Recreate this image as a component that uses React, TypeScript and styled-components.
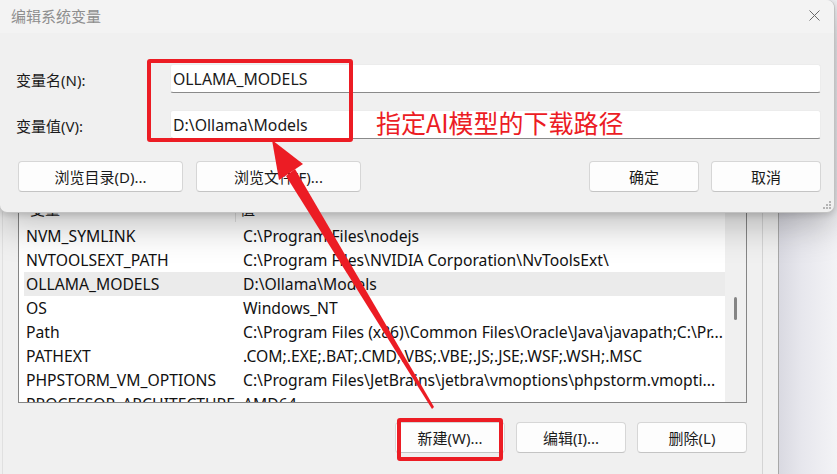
import React from "react";
import styled, { createGlobalStyle } from "styled-components";

const GlobalStyle = createGlobalStyle`
  *, *::before, *::after { box-sizing: border-box; }
  html, body { margin: 0; padding: 0; overflow: hidden; background: #f0f0f0; }
`;

const FONT = `"Noto Sans", "Noto Sans CJK SC", sans-serif`;

const Desktop = styled.div`
  position: relative;
  width: 837px;
  height: 474px;
  overflow: hidden;
  display: flex;
  font-family: ${FONT};
  font-size: 15px;
  color: #1a1a1a;
`;

const ParentWindow = styled.div`
  width: 761px;
  margin-left: 2px;
  background: #f0f0f0;
  border-left: 1px solid #e0e0e0;
  border-right: 1px solid #d4d4d4;
  padding: 198px 0 0 15px;
  display: flex;
  flex-direction: column;
`;

const SideStrip = styled.div`
  width: 16px;
  background: #f0f0f0;
  border-right: 1px solid #a8a8a8;
`;

const Backdrop = styled.div`
  flex: 1;
  background: linear-gradient(90deg, #d9d9e1 0%, #e7e7ed 40%, #f3f3f6 100%);
`;

const ListBox = styled.div`
  width: 729px;
  height: 205px;
  border: 1px solid #858585;
  background: #fff;
  display: flex;
  overflow: hidden;
`;

const ListBody = styled.div`
  flex: 1;
  padding-left: 5px;
  overflow: hidden;
`;

const HeaderRow = styled.div`
  height: 25px;
  display: flex;
  line-height: 20px;
`;

const HeaderCell = styled.div<{ $w?: number; $divider?: boolean }>`
  ${(p) => (p.$w ? `width: ${p.$w}px;` : "flex: 1;")}
  padding-left: ${(p) => (p.$divider ? 6 : 4)}px;
  border-right: ${(p) => (p.$divider ? "1px solid #e3e3e3" : "none")};
  height: 23px;
`;

const Row = styled.div<{ $selected?: boolean }>`
  height: 24px;
  display: flex;
  align-items: center;
  background: ${(p) => (p.$selected ? "#ebebeb" : "transparent")};
  white-space: nowrap;
  font-size: 15.7px;
`;

const Cell = styled.div<{ $w?: number }>`
  ${(p) => (p.$w ? `width: ${p.$w}px; flex: none;` : "flex: 1;")}
  padding-left: 2px;
  overflow: hidden;
  color: #111;
`;

const ScrollTrack = styled.div`
  width: 21px;
  background: #f0f0f0;
  display: flex;
  justify-content: center;
  padding-top: 98px;
`;

const ScrollThumb = styled.div`
  width: 3px;
  height: 23px;
  border-radius: 2px;
  background: #858585;
`;

const ParentButtons = styled.div`
  width: 729px;
  margin-top: 19px;
  display: flex;
  justify-content: flex-end;
  gap: 11px;
`;

const Button = styled.button<{ $w: number }>`
  width: ${(p) => p.$w}px;
  height: 31px;
  padding: 0;
  background: #fdfdfd;
  border: 1px solid #d6d6d6;
  border-bottom-color: #c4c4c4;
  border-radius: 4px;
  font-family: ${FONT};
  font-size: 15px;
  color: #1a1a1a;
  display: flex;
  align-items: center;
  justify-content: center;
`;

const Dialog = styled.div`
  position: absolute;
  left: -1px;
  top: 0;
  width: 836px;
  height: 213px;
  background: #f0f0f0;
  border: 1px solid #c2c2c2;
  border-top: none;
  border-radius: 0 8px 8px 8px;
  box-shadow: 0 12px 36px rgba(0, 0, 0, 0.26), 0 2px 6px rgba(0, 0, 0, 0.14);
  display: flex;
  flex-direction: column;
  z-index: 2;
`;

const TitleBar = styled.div`
  height: 33px;
  background: #f3f3f3;
  border-radius: 0 8px 0 0;
  display: flex;
  align-items: center;
  justify-content: space-between;
  padding: 0 14px 2px 11px;
`;

const Title = styled.div`
  font-size: 15px;
  color: #8e8e8e;
`;

const DialogBody = styled.div`
  flex: 1;
  padding: 31px 13px 0 16px;
  display: flex;
  flex-direction: column;
`;

const Form = styled.div`
  display: grid;
  grid-template-columns: 154px 1fr;
  grid-auto-rows: 29px;
  row-gap: 17px;
  align-items: center;
`;

const Label = styled.div`
  font-size: 15px;
  color: #1a1a1a;
  padding-top: 2px;
`;

const Input = styled.div`
  height: 29px;
  background: #fff;
  border: 1px solid #ececec;
  border-bottom: 1px solid #8a8a8a;
  border-radius: 3px;
  padding-left: 2px;
  display: flex;
  align-items: center;
  font-size: 15.8px;
  color: #1a1a1a;
`;

const DialogButtons = styled.div`
  margin-top: 22px;
  padding-left: 2px;
  display: flex;
  align-items: center;
`;

const ButtonGroup = styled.div<{ $gap: number }>`
  display: flex;
  gap: ${(p) => p.$gap}px;
`;

const Spacer = styled.div`
  flex: 1;
`;

const Grip = styled.svg`
  position: absolute;
  right: 2px;
  bottom: 2px;
`;

const Overlay = styled.svg`
  position: absolute;
  inset: 0;
  z-index: 3;
  pointer-events: none;
`;

const HighlightBox = styled.div<{ $x: number; $y: number; $w: number; $h: number }>`
  position: absolute;
  left: ${(p) => p.$x}px;
  top: ${(p) => p.$y}px;
  width: ${(p) => p.$w}px;
  height: ${(p) => p.$h}px;
  border: 4px solid #ec1c24;
  border-radius: 3px;
  z-index: 3;
`;

const Note = styled.div`
  position: absolute;
  left: 376px;
  top: 105px;
  font-family: "Noto Sans CJK SC", sans-serif;
  font-size: 25px;
  line-height: 35px;
  color: #ec1c24;
  z-index: 3;
  white-space: nowrap;
`;

const rows: { name: string; value: string; selected?: boolean }[] = [
  { name: "NVM_SYMLINK", value: "C:\\Program Files\\nodejs" },
  { name: "NVTOOLSEXT_PATH", value: "C:\\Program Files\\NVIDIA Corporation\\NvToolsExt\\" },
  { name: "OLLAMA_MODELS", value: "D:\\Ollama\\Models", selected: true },
  { name: "OS", value: "Windows_NT" },
  { name: "Path", value: "C:\\Program Files (x86)\\Common Files\\Oracle\\Java\\javapath;C:\\Pr..." },
  { name: "PATHEXT", value: ".COM;.EXE;.BAT;.CMD;.VBS;.VBE;.JS;.JSE;.WSF;.WSH;.MSC" },
  { name: "PHPSTORM_VM_OPTIONS", value: "C:\\Program Files\\JetBrains\\jetbra\\vmoptions\\phpstorm.vmopti..." },
  { name: "PROCESSOR_ARCHITECTURE", value: "AMD64" },
];

export default function App() {
  return (
    <>
      <GlobalStyle />
      <Desktop>
        <ParentWindow>
          <ListBox>
            <ListBody>
              <HeaderRow>
                <HeaderCell $w={212} $divider>变量</HeaderCell>
                <HeaderCell>值</HeaderCell>
              </HeaderRow>
              {rows.map((r) => (
                <Row key={r.name} $selected={r.selected}>
                  <Cell $w={217}>{r.name}</Cell>
                  <Cell>{r.value}</Cell>
                </Row>
              ))}
            </ListBody>
            <ScrollTrack>
              <ScrollThumb />
            </ScrollTrack>
          </ListBox>
          <ParentButtons>
            <Button $w={110}>新建(W)...</Button>
            <Button $w={110}>编辑(I)...</Button>
            <Button $w={110}>删除(L)</Button>
          </ParentButtons>
        </ParentWindow>
        <SideStrip />
        <Backdrop />

        <Dialog>
          <TitleBar>
            <Title>编辑系统变量</Title>
            <svg width="11" height="11" viewBox="0 0 11 11">
              <path d="M0.5 0.5 L10.5 10.5 M10.5 0.5 L0.5 10.5" stroke="#6a6a6a" strokeWidth="1" fill="none" />
            </svg>
          </TitleBar>
          <DialogBody>
            <Form>
              <Label>变量名(N):</Label>
              <Input>OLLAMA_MODELS</Input>
              <Label>变量值(V):</Label>
              <Input>D:\Ollama\Models</Input>
            </Form>
            <DialogButtons>
              <ButtonGroup $gap={13}>
                <Button $w={165}>浏览目录(D)...</Button>
                <Button $w={165}>浏览文件(F)...</Button>
              </ButtonGroup>
              <Spacer />
              <ButtonGroup $gap={12}>
                <Button $w={110}>确定</Button>
                <Button $w={110}>取消</Button>
              </ButtonGroup>
            </DialogButtons>
          </DialogBody>
          <Grip width="10" height="10" viewBox="0 0 10 10">
            <g fill="#b4b4b4">
              <rect x="7" y="1" width="2" height="2" />
              <rect x="4" y="4" width="2" height="2" />
              <rect x="7" y="4" width="2" height="2" />
              <rect x="1" y="7" width="2" height="2" />
              <rect x="4" y="7" width="2" height="2" />
              <rect x="7" y="7" width="2" height="2" />
            </g>
          </Grip>
        </Dialog>

        <HighlightBox $x={147} $y={59} $w={206} $h={83} />
        <Note>指定AI模型的下载路径</Note>
        <HighlightBox $x={397} $y={418} $w={106} $h={43} />
        <Overlay width="837" height="474" viewBox="0 0 837 474">
          <polygon points="272,140 303,164 279,180" fill="#ec1c24" />
          <polygon points="295,169 286,176 432,409 434,407" fill="#ec1c24" />
        </Overlay>
      </Desktop>
    </>
  );
}
